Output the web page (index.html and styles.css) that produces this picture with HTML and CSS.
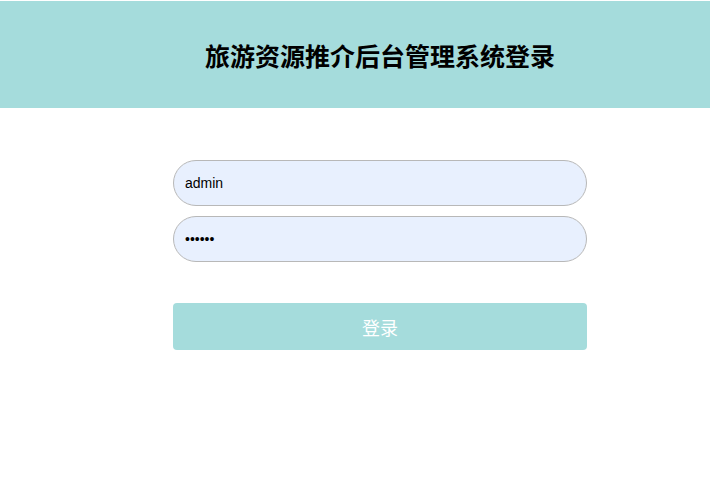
FILE: index.html
```html
<!DOCTYPE html>
<html lang="zh">
<head>
<meta charset="utf-8">
<title>旅游资源推介后台管理系统登录</title>
<link rel="stylesheet" href="styles.css">
</head>
<body>
<header class="header">
  <h1 class="title">旅游资源推介后台管理系统登录</h1>
</header>
<main class="main">
  <form class="form">
    <input class="field" type="text" value="admin">
    <input class="field" type="password" value="123456">
    <button class="btn" type="button">登录</button>
  </form>
</main>
</body>
</html>
```
FILE: styles.css
```css
html, body {
  margin: 0;
  padding: 0;
  background: #fff;
}
body {
  padding-top: 1px;
  font-family: "Liberation Sans", Arial, "Noto Sans CJK SC", sans-serif;
}
.header {
  height: 107px;
  background: #a5dcdc;
  display: flex;
  align-items: center;
  justify-content: center;
  padding-left: 50px;
}
.title {
  margin: 0;
  font-family: "Noto Sans CJK SC", sans-serif;
  font-size: 25px;
  font-weight: bold;
  color: #000;
  letter-spacing: 0;
  position: relative;
  top: 0;
}
.main {
  display: flex;
  justify-content: center;
  padding-left: 50px;
  padding-top: 52px;
}
.form {
  width: 414px;
  display: flex;
  flex-direction: column;
}
.field {
  box-sizing: border-box;
  height: 46px;
  border: 1px solid #b8b8b8;
  border-radius: 23px;
  background: #e8f0fe;
  padding: 0 11px;
  font-family: "Liberation Sans", Arial, sans-serif;
  font-size: 14px;
  color: #000;
  margin: 0 0 10px 0;
  outline: none;
}
.btn {
  margin-top: 31px;
  height: 47px;
  border: none;
  border-radius: 4px;
  background: #a5dcdc;
  color: #fff;
  font-family: "Noto Sans CJK SC", sans-serif;
  font-size: 18px;
  cursor: pointer;
}
```
